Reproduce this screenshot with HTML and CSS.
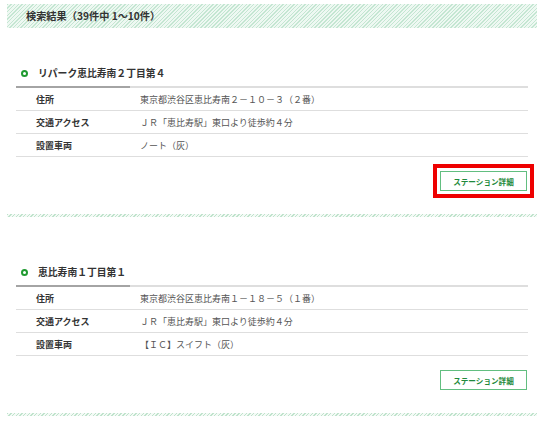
FILE: index.html
```html
<!DOCTYPE html>
<html lang="ja">
<head>
<meta charset="utf-8">
<link rel="stylesheet" href="styles.css">
</head>
<body>
<div class="page">
  <div class="result-head">検索結果（39件中 1〜10件）</div>

  <section class="card">
    <h2 class="card-title"><span class="ring"></span>リパーク恵比寿南２丁目第４</h2>
    <div class="rule"></div>
    <div class="row"><div class="label">住所</div><div class="value">東京都渋谷区恵比寿南２－１０－３（２番）</div></div>
    <div class="row"><div class="label">交通アクセス</div><div class="value">ＪＲ「恵比寿駅」東口より徒歩約４分</div></div>
    <div class="row"><div class="label">設置車両</div><div class="value">ノート（灰）</div></div>
    <div class="actions"><a class="btn btn-marked">ステーション詳細</a></div>
  </section>

  <section class="card">
    <h2 class="card-title"><span class="ring"></span>恵比寿南１丁目第１</h2>
    <div class="rule"></div>
    <div class="row"><div class="label">住所</div><div class="value">東京都渋谷区恵比寿南１－１８－５（１番）</div></div>
    <div class="row"><div class="label">交通アクセス</div><div class="value">ＪＲ「恵比寿駅」東口より徒歩約４分</div></div>
    <div class="row"><div class="label">設置車両</div><div class="value">【ＩＣ】スイフト（灰）</div></div>
    <div class="actions"><a class="btn">ステーション詳細</a></div>
  </section>
</div>
</body>
</html>
```

FILE: styles.css
```css
html, body {
  margin: 0;
  padding: 0;
  background: #fff;
}
body {
  font-family: "Noto Sans CJK JP", "Noto Sans", sans-serif;
  color: #333;
}
.page {
  width: 530px;
  padding: 4px 0 0 7px;
}
.result-head {
  height: 24px;
  line-height: 24px;
  padding-left: 19px;
  font-size: 10.2px;
  font-weight: bold;
  color: #333;
  background: repeating-linear-gradient(135deg, #c4e6d2 0 1px, #eef8f2 1px 2.6px);
}
.card {
  padding: 38px 9px 26px 9px;
  background-image: repeating-linear-gradient(135deg, #bfe3cc 0 1px, #f4faf6 1px 2.6px);
  background-size: 100% 3px;
  background-repeat: no-repeat;
  background-position: left bottom;
}
.card + .card {
  padding-top: 48px;
}
.card-title {
  margin: 0 0 6px 0;
  display: flex;
  align-items: center;
  height: 14px;
  font-size: 9.8px;
  font-weight: bold;
  color: #333;
}
.ring {
  width: 7px;
  height: 7px;
  box-sizing: border-box;
  border: 2px solid #1f9a30;
  border-radius: 50%;
  margin: 0 10px 0 5px;
}
.rule {
  height: 2px;
  background: linear-gradient(to right, #a4a4a4 114px, #dedede 114px);
}
.row {
  display: flex;
  height: 22px;
  align-items: center;
  border-bottom: 1px solid #dedede;
  font-size: 9px;
}
.label {
  width: 104px;
  padding-left: 20px;
  font-weight: bold;
  color: #333;
}
.value {
  color: #555;
}
.actions {
  display: flex;
  justify-content: flex-end;
  margin-top: 14px;
  padding-right: 1px;
}
.btn {
  width: 87px;
  height: 20px;
  box-sizing: border-box;
  border: 1px solid #62be80;
  display: flex;
  align-items: center;
  justify-content: center;
  font-size: 7.6px;
  font-weight: bold;
  color: #1f8a3c;
  background: #fff;
}
.btn-marked {
  outline: 4px solid #ee0000;
  outline-offset: 3px;
}
```
